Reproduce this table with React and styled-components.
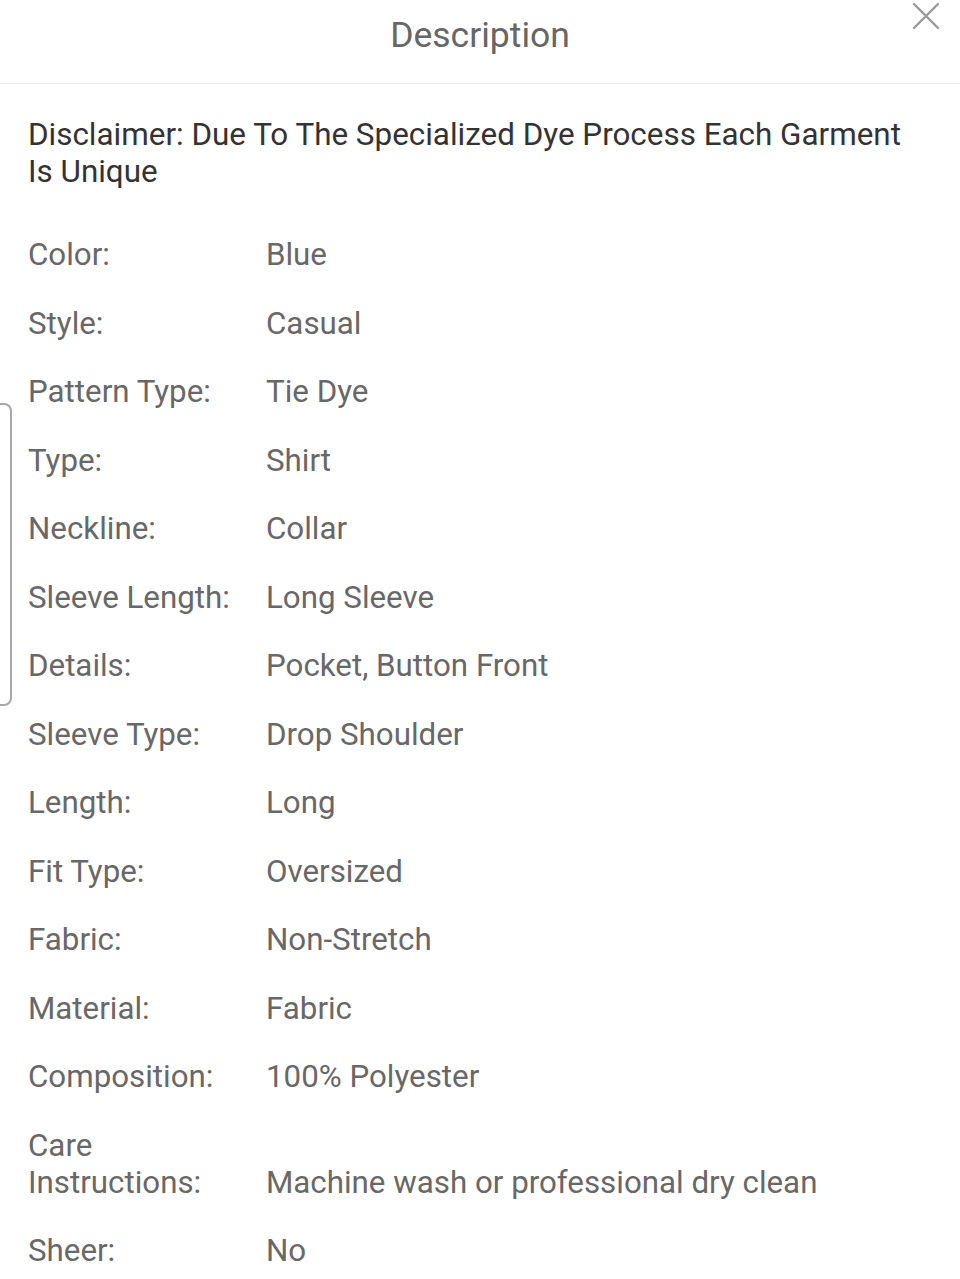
import React from "react";
import styled, { createGlobalStyle } from "styled-components";

const Global = createGlobalStyle`
  html, body { margin: 0; padding: 0; background: #fff; }
  body { font-family: Roboto, "Liberation Sans", Arial, sans-serif; }
`;

const Page = styled.div`
  position: relative;
  width: 960px;
  min-height: 1279px;
  background: #fff;
  overflow: hidden;
`;

const Header = styled.header`
  position: relative;
  height: 83px;
  border-bottom: 1px solid #ececec;
  display: flex;
  align-items: flex-start;
  justify-content: center;
`;

const Title = styled.h1`
  margin: 0;
  padding-top: 13px;
  font-size: 35.5px;
  line-height: 44px;
  font-weight: 400;
  color: #666;
`;

const Close = styled.button`
  position: absolute;
  top: 2px;
  right: 20px;
  width: 28px;
  height: 28px;
  padding: 0;
  border: 0;
  background: none;
  display: flex;
  align-items: center;
  justify-content: center;
`;

const Body = styled.section`
  padding: 32px 28px 40px;
`;

const Disclaimer = styled.p`
  margin: 0 0 46px;
  font-size: 31.4px;
  line-height: 37px;
  color: #333;
`;

const Specs = styled.dl`
  margin: 0;
  display: grid;
  grid-template-columns: 238px 1fr;
  row-gap: 31.5px;
  font-size: 31.3px;
  line-height: 37px;
  color: #686868;
`;

const Label = styled.dt`
  margin: 0;
  padding-right: 4px;
`;

const Value = styled.dd`
  margin: 0;
  align-self: end;
`;

const EdgeBracket = styled.div`
  position: absolute;
  left: -12px;
  top: 403px;
  width: 20px;
  height: 299px;
  border: 2px solid #a8a8a8;
  border-radius: 8px;
`;

const specs = [
  ["Color:", "Blue"],
  ["Style:", "Casual"],
  ["Pattern Type:", "Tie Dye"],
  ["Type:", "Shirt"],
  ["Neckline:", "Collar"],
  ["Sleeve Length:", "Long Sleeve"],
  ["Details:", "Pocket, Button Front"],
  ["Sleeve Type:", "Drop Shoulder"],
  ["Length:", "Long"],
  ["Fit Type:", "Oversized"],
  ["Fabric:", "Non-Stretch"],
  ["Material:", "Fabric"],
  ["Composition:", "100% Polyester"],
  ["Care Instructions:", "Machine wash or professional dry clean"],
  ["Sheer:", "No"],
];

export default function App() {
  return (
    <Page>
      <Global />
      <Header>
        <Title>Description</Title>
        <Close aria-label="Close">
          <svg width="28" height="28" viewBox="0 0 28 28">
            <path d="M2 2 L26 26 M26 2 L2 26" stroke="#9a9a9a" strokeWidth="2.4" strokeLinecap="round" />
          </svg>
        </Close>
      </Header>
      <Body>
        <Disclaimer>
          Disclaimer: Due To The Specialized Dye Process Each Garment Is Unique
        </Disclaimer>
        <Specs>
          {specs.map(([k, v]) => (
            <React.Fragment key={k}>
              <Label>{k}</Label>
              <Value>{v}</Value>
            </React.Fragment>
          ))}
        </Specs>
      </Body>
      <EdgeBracket />
    </Page>
  );
}
